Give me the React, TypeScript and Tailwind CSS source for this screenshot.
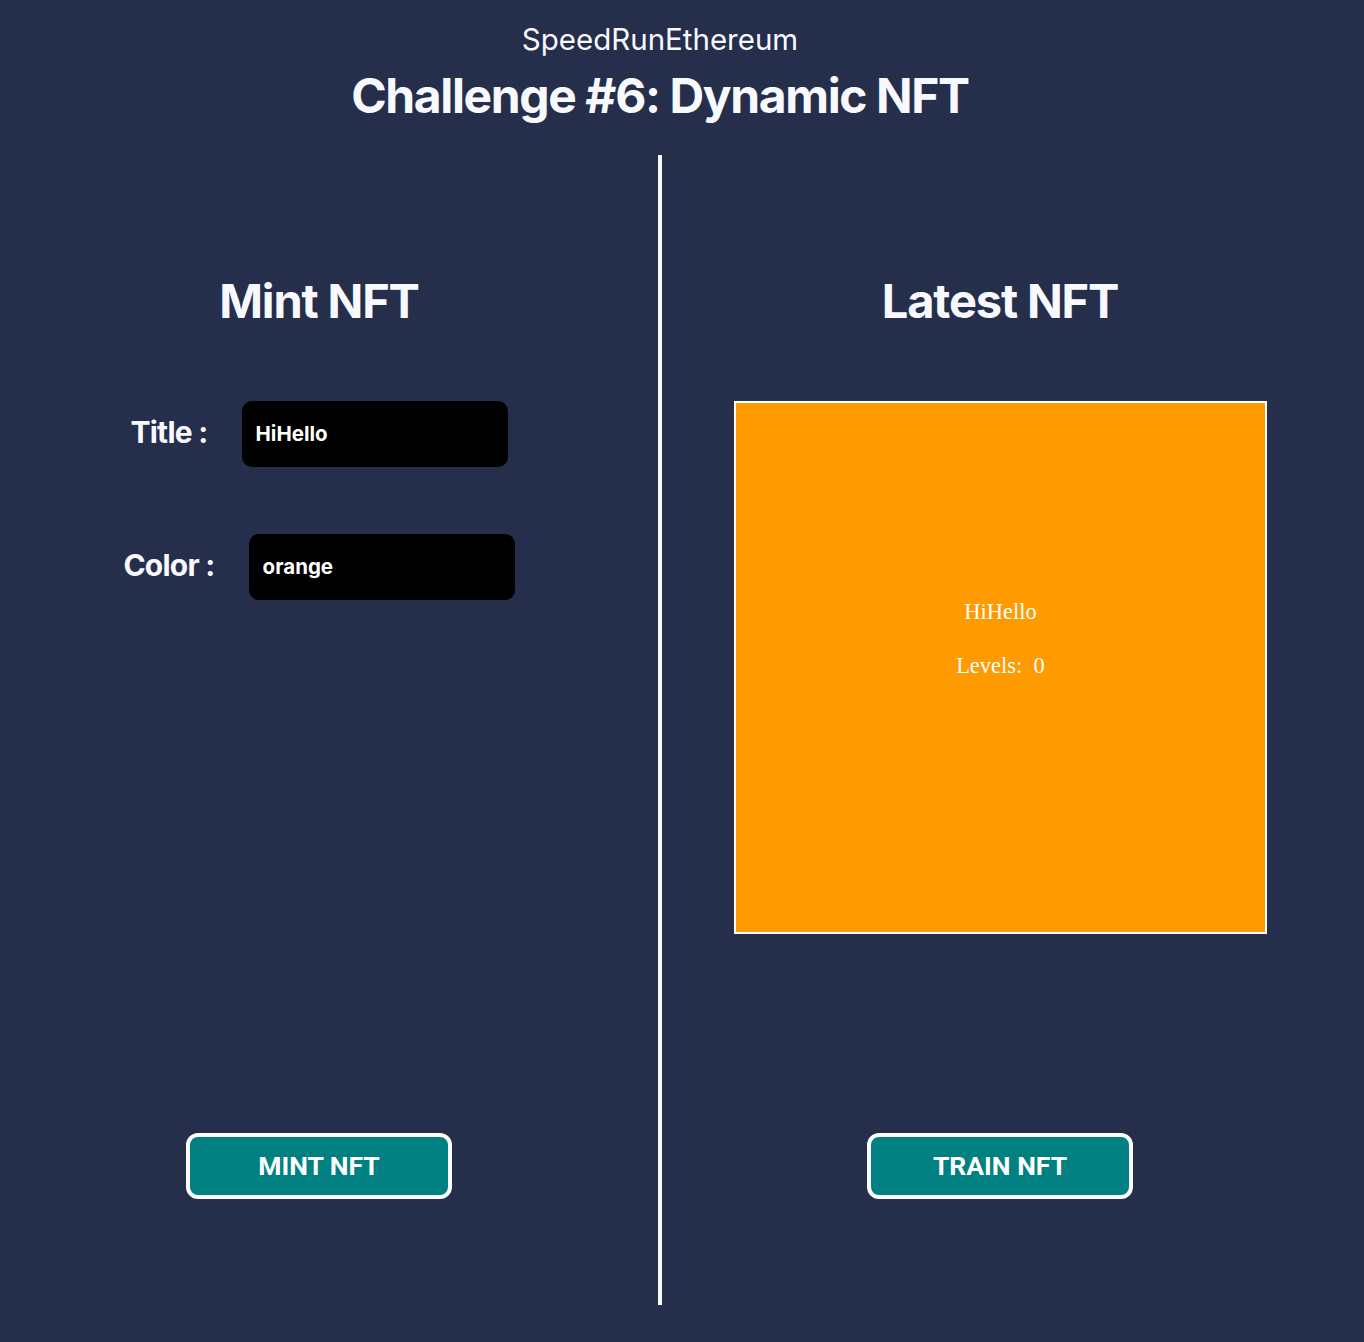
import { useState } from 'react';

const sans = "font-['Inter','Liberation_Sans',sans-serif]";

function Field({ label, value }: { label: string; value: string }) {
  return (
    <div className="flex items-center justify-center gap-[34px]">
      <label className="mb-[4px] text-[30px] font-bold text-[#f8f8ff] tracking-tight">{label}</label>
      <div className="w-[266px] h-[66px] rounded-[10px] bg-black flex items-center px-[14px] text-[20.5px] font-bold text-white">
        {value}
      </div>
    </div>
  );
}

function ActionButton({ children }: { children: string }) {
  return (
    <button className="w-[266px] h-[66px] rounded-[12px] border-[4px] border-white bg-[#008080] text-white text-[26.5px] font-bold font-['Roboto','Inter',sans-serif]">
      {children}
    </button>
  );
}

export default function App() {
  const [title] = useState('HiHello');
  const [color] = useState('orange');
  const level = 0;

  return (
    <div className={`min-h-[1342px] bg-[#252e4b] ${sans}`}>
      {/* header */}
      <div className="w-[1320px] flex flex-col items-center pt-[22px]">
        <h2 className="text-[29.5px] leading-[34px] text-[#f8f8ff]">SpeedRunEthereum</h2>
        <h1 className="mt-[14px] text-[48px] leading-[52px] font-bold text-[#f8f8ff] tracking-[-0.029em]">
          Challenge #6: Dynamic NFT
        </h1>
      </div>

      <div className="flex h-[1150px] mt-[33px]">
        {/* mint side */}
        <div className="w-[638px] shrink-0 flex flex-col items-center pt-[122px] pb-[106px]">
          <h3 className="text-[47px] leading-[48px] font-bold text-[#f8f8ff] tracking-tight">Mint NFT</h3>
          <div className="mt-[76px] flex flex-col gap-[67px]">
            <Field label="Title :" value={title} />
            <Field label="Color :" value={color} />
          </div>
          <div className="mt-auto">
            <ActionButton>MINT NFT</ActionButton>
          </div>
        </div>

        <div className="ml-[20px] w-[4px] shrink-0 bg-[#f8f8ff]" />

        {/* latest side */}
        <div className="w-[676px] shrink-0 flex flex-col items-center pt-[122px] pb-[106px]">
          <h3 className="text-[47px] leading-[48px] font-bold text-[#f8f8ff] tracking-tight">Latest NFT</h3>
          <div className="mt-[76px] border-2 border-white bg-[#ff9a00] w-[533px] h-[533px]">
            <svg viewBox="0 0 529 529" width="529" height="529">
              <rect width="529" height="529" fill="#ff9a00" />
              <text x="264.5" y="216" textAnchor="middle" fill="white" fontSize="22.5" fontFamily="'Liberation Serif', serif">
                {title}
              </text>
              <text x="264.5" y="270" textAnchor="middle" fill="white" fontSize="22.5" fontFamily="'Liberation Serif', serif">
                {'Levels:\u00a0 ' + level}
              </text>
            </svg>
          </div>
          <div className="mt-auto">
            <ActionButton>TRAIN NFT</ActionButton>
          </div>
        </div>
      </div>
    </div>
  );
}
